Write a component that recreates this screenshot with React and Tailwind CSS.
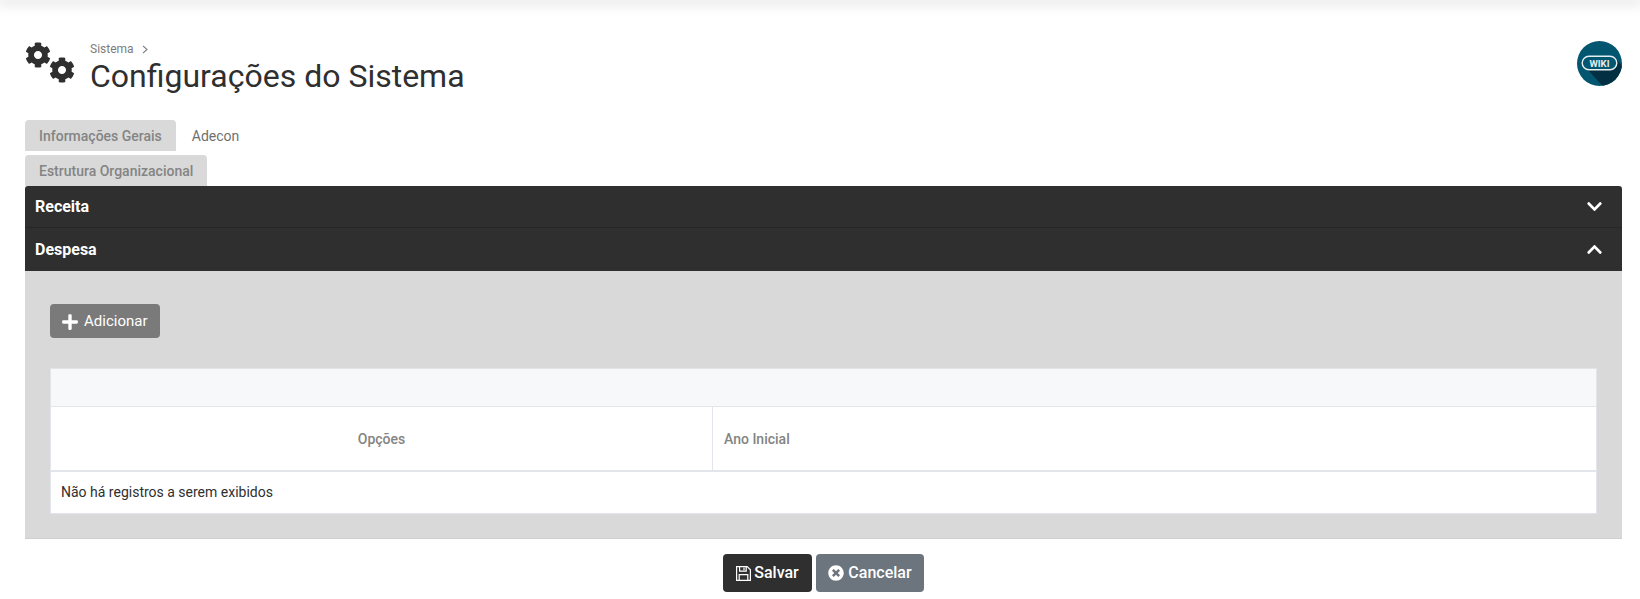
import React from 'react';
import { FaCog, FaChevronDown, FaChevronUp, FaPlus, FaTimesCircle } from 'react-icons/fa';

const WikiLogo = () => (
  <svg width="45" height="45" viewBox="0 0 45 45">
    <defs>
      <clipPath id="wiki-clip">
        <circle cx="22.5" cy="22.5" r="22.5" />
      </clipPath>
    </defs>
    <g clipPath="url(#wiki-clip)">
      <rect width="45" height="45" fill="#03566f" />
      <path d="M10 28 L38 17 L52 32 L52 52 L32 52 Z" fill="#032f42" />
    </g>
    <rect x="5.2" y="15.2" width="34.6" height="13.6" rx="6.8" fill="#03566f" stroke="#e6eef1" strokeWidth="1.4" />
    <text x="22.5" y="25.6" textAnchor="middle" fontSize="9.5" fontWeight="700" fill="#e6eef1" fontFamily="Roboto, sans-serif">WIKI</text>
  </svg>
);

const SaveIcon = () => (
  <svg width="15" height="15" viewBox="0 0 15 15" fill="none" stroke="currentColor" strokeWidth="1.2">
    <path d="M.6.6h10.6l3.2 3.2v10.6H.6z" />
    <path d="M3.6.8v4.4h6.6V.8" />
    <path d="M3.2 14.2V8.6h8.6v5.6" />
    <path d="M8 1.6v2.6" />
  </svg>
);

const App = () => {
  return (
    <div className="w-[1640px] h-[599px] overflow-hidden bg-white text-[14px] text-[#2f2f2f] font-['Roboto',sans-serif]">
      <div className="h-0 shadow-[0_0_14px_4px_rgba(0,0,0,0.12)]" />

      <div className="pl-[25px] pr-[18px] pt-[41px] flex justify-between items-start">
        <div className="flex">
          <div className="flex items-start w-[65px] text-[#2f2f2f]">
            <FaCog className="w-[26px] h-[26px] mt-[1px] shrink-0" />
            <FaCog className="w-[26px] h-[26px] mt-[16px] -ml-[2px] shrink-0" />
          </div>
          <div>
            <div className="flex items-center h-[16px] text-[12px] font-normal text-[#7c7c7c]">
              Sistema
              <span className="ml-[8px] text-[#7c7c7c]">
                <svg width="6" height="9" viewBox="0 0 6 9" fill="none" stroke="currentColor" strokeWidth="1.1"><path d="M1 .8 5 4.5 1 8.2" /></svg>
              </span>
            </div>
            <h1 className="text-[32px] leading-[38px] font-normal text-[#2f2f2f]">Configurações do Sistema</h1>
          </div>
        </div>
        <WikiLogo />
      </div>

      <div className="pl-[25px] pr-[18px] mt-[25px]">
        <div className="flex flex-wrap w-[280px] gap-y-[4px]">
          <div className="h-[31px] px-[14px] pt-[2px] flex items-center bg-[#d9d9d9] rounded-t-[4px] font-medium text-[#848484]">Informações Gerais</div>
          <div className="h-[31px] px-[16px] pt-[2px] flex items-center text-[#6f6f6f]">Adecon</div>
          <div className="h-[31px] px-[14px] pt-[2px] flex items-center bg-[#d9d9d9] rounded-t-[4px] font-medium text-[#848484]">Estrutura Organizacional</div>
        </div>

        <div className="rounded-tr-[3px] rounded-tl-[3px] overflow-hidden">
          <div className="h-[42px] pl-[10px] pr-[19px] flex items-center justify-between bg-[#2f2f2f] border-b border-[#262626] text-white text-[16px] font-bold">
            <span>Receita</span>
            <FaChevronDown className="w-[17px] h-[17px]" />
          </div>
          <div className="h-[43px] pl-[10px] pr-[19px] flex items-center justify-between bg-[#2f2f2f] text-white text-[16px] font-bold">
            <span>Despesa</span>
            <FaChevronUp className="w-[17px] h-[17px]" />
          </div>
        </div>

        <div className="h-[268px] bg-[#d9d9d9] px-[25px] pt-[33px] border-b border-[#cfcfcf]">
          <button className="h-[34px] w-[110px] pl-[11px] pt-[1px] flex items-center gap-[5px] rounded-[4px] bg-[#7a7a7a] text-white text-[15px]">
            <FaPlus className="w-[18px] h-[18px]" />
            Adicionar
          </button>

          <div className="mt-[30px] border border-[#e2e5ea] bg-white">
            <div className="h-[38px] bg-[#f7f8fa] border-b border-[#e2e5ea]" />
            <div className="flex h-[65px] border-b-2 border-[#e2e5ea] text-[#848484] font-medium">
              <div className="w-[662px] pt-[2px] flex items-center justify-center border-r border-[#e2e5ea]">Opções</div>
              <div className="flex-1 pt-[2px] flex items-center pl-[11px]">Ano Inicial</div>
            </div>
            <div className="h-[41px] flex items-center pl-[10px] text-[#2f2f2f]">Não há registros a serem exibidos</div>
          </div>
        </div>

        <div className="mt-[15px] flex justify-center gap-[4px] font-medium text-[16px] text-white">
          <button className="h-[38px] w-[89px] flex items-center justify-center gap-[3px] rounded-[4px] bg-[#2f2f2f]">
            <SaveIcon />
            Salvar
          </button>
          <button className="h-[38px] w-[108px] flex items-center justify-center gap-[4px] rounded-[4px] bg-[#6c757d]">
            <FaTimesCircle className="w-[16px] h-[16px]" />
            Cancelar
          </button>
        </div>
      </div>
    </div>
  );
};

export default App;
